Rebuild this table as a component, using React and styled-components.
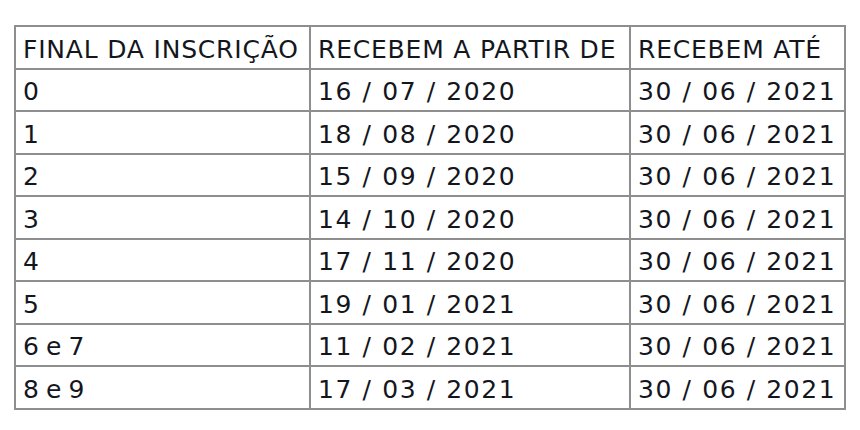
import React from 'react';
import styled, { createGlobalStyle } from 'styled-components';

const GlobalStyle = createGlobalStyle`
	body {
		margin: 0;
		background: #fff;
		font-family: 'DejaVu Sans', 'Noto Sans', sans-serif;
	}
`;

const Page = styled.div`
	width: 860px;
	height: 430px;
	padding: 25px 0 0 14px;
	box-sizing: border-box;
`;

const Table = styled.table`
	border-collapse: collapse;
	table-layout: fixed;
	width: 832px;
	color: #14161d;
	font-size: 25px;
	col.first {
		width: 295px;
	}
	col.second {
		width: 320px;
	}
`;

const Cell = styled.td`
	border: 2px solid #8e8e8e;
	height: 36.5px;
	padding: 4px 0 0 7px;
	white-space: nowrap;
	overflow: hidden;
	text-align: left;
	font-weight: 400;
	letter-spacing: ${(p) => p.$spacing || '1.6px'};
	line-height: 1;
`;

const rows = [
	['0', '16 / 07 / 2020'],
	['1', '18 / 08 / 2020'],
	['2', '15 / 09 / 2020'],
	['3', '14 / 10 / 2020'],
	['4', '17 / 11 / 2020'],
	['5', '19 / 01 / 2021'],
	['6 e 7', '11 / 02 / 2021'],
	['8 e 9', '17 / 03 / 2021'],
];

function App() {
	return (
		<Page>
			<GlobalStyle />
			<Table>
				<colgroup>
					<col className="first" />
					<col className="second" />
					<col />
				</colgroup>
				<thead>
					<tr>
						<Cell as="th" $spacing="0.8px">FINAL DA INSCRIÇÃO</Cell>
						<Cell as="th" $spacing="0.8px">RECEBEM A PARTIR DE</Cell>
						<Cell as="th" $spacing="0.8px">RECEBEM ATÉ</Cell>
					</tr>
				</thead>
				<tbody>
					{rows.map(([final, start]) => (
						<tr key={final}>
							<Cell $spacing="-0.4px">{final}</Cell>
							<Cell>{start}</Cell>
							<Cell>30 / 06 / 2021</Cell>
						</tr>
					))}
				</tbody>
			</Table>
		</Page>
	);
}

export default App;
